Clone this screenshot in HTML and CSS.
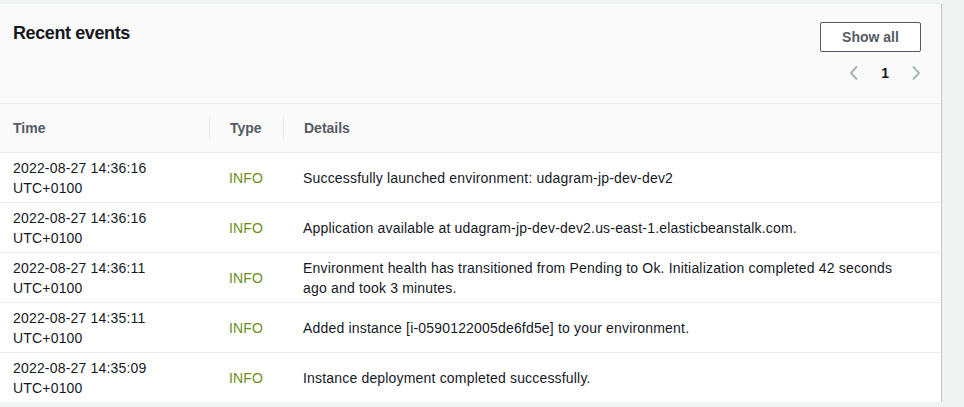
FILE: index.html
```html
<!DOCTYPE html>
<html>
<head>
<meta charset="utf-8">
<link rel="stylesheet" href="styles.css">
</head>
<body>
<div class="page">
  <section class="card">
    <header class="card-header">
      <h2 class="title">Recent events</h2>
      <div class="actions">
        <button class="btn">Show all</button>
        <nav class="pager">
          <svg class="chev" width="10" height="16" viewBox="0 0 10 16"><path d="M8 1.5 L2 8 L8 14.5" fill="none" stroke="#aab7b8" stroke-width="2"/></svg>
          <span class="page-num">1</span>
          <svg class="chev" width="10" height="16" viewBox="0 0 10 16"><path d="M2 1.5 L8 8 L2 14.5" fill="none" stroke="#aab7b8" stroke-width="2"/></svg>
        </nav>
      </div>
    </header>
    <table class="events">
      <thead>
        <tr>
          <th class="c-time"><span class="th-in">Time</span></th>
          <th class="c-type"><span class="th-in sep">Type</span></th>
          <th class="c-det"><span class="th-in sep">Details</span></th>
        </tr>
      </thead>
      <tbody>
        <tr>
          <td class="c-time">2022-08-27 14:36:16<br>UTC+0100</td>
          <td class="c-type info">INFO</td>
          <td class="c-det">Successfully launched environment: udagram-jp-dev-dev2</td>
        </tr>
        <tr>
          <td class="c-time">2022-08-27 14:36:16<br>UTC+0100</td>
          <td class="c-type info">INFO</td>
          <td class="c-det">Application available at udagram-jp-dev-dev2.us-east-1.elasticbeanstalk.com.</td>
        </tr>
        <tr>
          <td class="c-time">2022-08-27 14:36:11<br>UTC+0100</td>
          <td class="c-type info">INFO</td>
          <td class="c-det">Environment health has transitioned from Pending to Ok. Initialization completed 42 seconds ago and took 3 minutes.</td>
        </tr>
        <tr>
          <td class="c-time">2022-08-27 14:35:11<br>UTC+0100</td>
          <td class="c-type info">INFO</td>
          <td class="c-det">Added instance [i-0590122005de6fd5e] to your environment.</td>
        </tr>
        <tr>
          <td class="c-time">2022-08-27 14:35:09<br>UTC+0100</td>
          <td class="c-type info">INFO</td>
          <td class="c-det">Instance deployment completed successfully.</td>
        </tr>
      </tbody>
    </table>
  </section>
</div>
</body>
</html>
```
FILE: styles.css
```css
html, body {
  margin: 0;
  padding: 0;
  background: #f2f3f3;
  font-family: "Liberation Sans", Arial, sans-serif;
  font-size: 14px;
  color: #16191f;
}
.page {
  padding-top: 3px;
}
.card {
  width: 941px;
  background: #fff;
  box-shadow: 0 1px 1px 0 rgba(0,28,36,.3), 1px 1px 1px 0 rgba(0,28,36,.15), -1px 1px 1px 0 rgba(0,28,36,.15);
  border-top: 1px solid #eaeded;
}
.card-header {
  background: #fafafa;
  display: flex;
  justify-content: space-between;
  align-items: flex-start;
  height: 99px;
  padding: 0 20px 0 13px;
}
.title {
  margin: 17px 0 0;
  font-size: 18px;
  font-weight: 700;
  letter-spacing: -0.4px;
  line-height: 24px;
  color: #16191f;
}
.actions {
  display: flex;
  flex-direction: column;
  align-items: flex-end;
  padding-top: 18px;
}
.btn {
  width: 101px;
  height: 30px;
  background: #fff;
  border: 1px solid #545b64;
  border-radius: 2px;
  font-family: inherit;
  font-size: 14px;
  font-weight: 700;
  color: #545b64;
  padding: 0;
}
.pager {
  display: flex;
  align-items: center;
  gap: 19px;
  margin-top: 11px;
  height: 20px;
}
.page-num {
  font-weight: 700;
  font-size: 14px;
  color: #16191f;
  padding: 0 3px;
}
.events {
  width: 100%;
  border-collapse: collapse;
  table-layout: fixed;
}
.events th {
  background: #fafafa;
  border-top: 1px solid #eaeded;
  border-bottom: 1px solid #eaeded;
  height: 48px;
  padding: 0;
  text-align: left;
  font-weight: 700;
  color: #545b64;
}
.th-in {
  display: block;
  line-height: 24px;
  padding-left: 20px;
}
.th-in.sep {
  border-left: 1px solid #eaeded;
}
.events th.c-time .th-in {
  padding-left: 13px;
}
.c-time { width: 209px; }
.c-type { width: 74px; }
.events td {
  height: 40px;
  padding: 5px 20px 4px;
  line-height: 20px;
  letter-spacing: 0.18px;
  border-bottom: 1px solid #eaeded;
  vertical-align: middle;
}
.events td.c-time {
  padding-left: 13px;
}
.events td.c-det {
  padding-right: 26px;
}
.events tr:last-child td {
  border-bottom: none;
}
.info {
  color: #6d8e1c;
}
```
